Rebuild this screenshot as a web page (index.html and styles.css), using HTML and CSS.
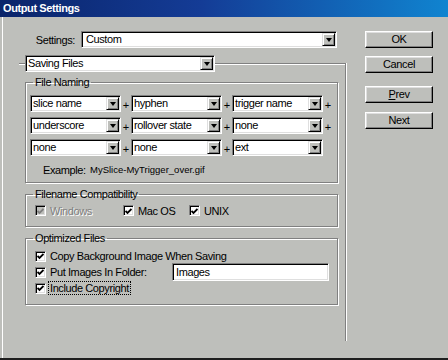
FILE: index.html
```html
<!DOCTYPE html>
<html>
<head>
<meta charset="utf-8">
<title>Output Settings</title>
<link rel="stylesheet" href="styles.css">
</head>
<body>
<div class="titlebar"><span class="title">Output Settings</span></div>
<div class="window">
  <div class="left">
    <div class="settings-row">
      <span class="settings-label">Settings:</span>
      <div class="combo combo-settings"><span class="combo-text">Custom</span><span class="arrow"></span></div>
    </div>
    <fieldset class="outer">
      <legend class="outer-legend"><div class="combo combo-section"><span class="combo-text">Saving Files</span><span class="arrow"></span></div></legend>

      <fieldset class="group naming">
        <legend>File Naming</legend>
        <div class="name-row">
          <div class="combo combo-name"><span class="combo-text">slice name</span><span class="arrow"></span></div><span class="plus">+</span>
          <div class="combo combo-name"><span class="combo-text">hyphen</span><span class="arrow"></span></div><span class="plus">+</span>
          <div class="combo combo-name"><span class="combo-text">trigger name</span><span class="arrow"></span></div><span class="plus">+</span>
        </div>
        <div class="name-row">
          <div class="combo combo-name"><span class="combo-text">underscore</span><span class="arrow"></span></div><span class="plus">+</span>
          <div class="combo combo-name"><span class="combo-text">rollover state</span><span class="arrow"></span></div><span class="plus">+</span>
          <div class="combo combo-name"><span class="combo-text">none</span><span class="arrow"></span></div><span class="plus">+</span>
        </div>
        <div class="name-row">
          <div class="combo combo-name"><span class="combo-text">none</span><span class="arrow"></span></div><span class="plus">+</span>
          <div class="combo combo-name"><span class="combo-text">none</span><span class="arrow"></span></div><span class="plus">+</span>
          <div class="combo combo-name"><span class="combo-text">ext</span><span class="arrow"></span></div>
        </div>
        <div class="example"><span class="ex-label">Example:</span><span class="ex-value">MySlice-MyTrigger_over.gif</span></div>
      </fieldset>

      <fieldset class="group compat">
        <legend>Filename Compatibility</legend>
        <div class="cb-row">
          <span class="cb-item item-win disabled"><span class="cb"><svg width="7" height="7" viewBox="0 0 7 7"><path d="M0.5 3 L2.5 5 L6.5 1" fill="none" stroke="currentColor" stroke-width="1.8"/></svg></span><span class="cb-text">Windows</span></span>
          <span class="cb-item item-mac"><span class="cb"><svg width="7" height="7" viewBox="0 0 7 7"><path d="M0.5 3 L2.5 5 L6.5 1" fill="none" stroke="currentColor" stroke-width="1.8"/></svg></span><span class="cb-text">Mac OS</span></span>
          <span class="cb-item"><span class="cb"><svg width="7" height="7" viewBox="0 0 7 7"><path d="M0.5 3 L2.5 5 L6.5 1" fill="none" stroke="currentColor" stroke-width="1.8"/></svg></span><span class="cb-text">UNIX</span></span>
        </div>
      </fieldset>

      <fieldset class="group optimized">
        <legend>Optimized Files</legend>
        <div class="opt-row"><span class="cb"><svg width="7" height="7" viewBox="0 0 7 7"><path d="M0.5 3 L2.5 5 L6.5 1" fill="none" stroke="currentColor" stroke-width="1.8"/></svg></span><span class="cb-text">Copy Background Image When Saving</span></div>
        <div class="opt-row"><span class="cb"><svg width="7" height="7" viewBox="0 0 7 7"><path d="M0.5 3 L2.5 5 L6.5 1" fill="none" stroke="currentColor" stroke-width="1.8"/></svg></span><span class="cb-text folder-label">Put Images In Folder:</span><div class="textfield">Images</div></div>
        <div class="opt-row"><span class="cb"><svg width="7" height="7" viewBox="0 0 7 7"><path d="M0.5 3 L2.5 5 L6.5 1" fill="none" stroke="currentColor" stroke-width="1.8"/></svg></span><span class="cb-text focus">Include Copyright</span></div>
      </fieldset>
    </fieldset>
  </div>
  <div class="buttons">
    <div class="btn btn-ok">OK</div>
    <div class="btn btn-cancel">Cancel</div>
    <div class="btn btn-prev"><u>P</u>rev</div>
    <div class="btn">Next</div>
  </div>
</div>
</body>
</html>
```

FILE: styles.css
```css
html, body {
  margin: 0;
  padding: 0;
}
body {
  width: 448px;
  height: 360px;
  overflow: hidden;
  background: #bebfbb;
  font-family: "Liberation Sans", Arial, sans-serif;
  font-size: 11px;
  letter-spacing: -0.4px;
  color: #000;
}

.titlebar {
  height: 17px;
  background: linear-gradient(to right, #0a246a 0%, #143c96 45%, #1084d0 100%);
  color: #fff;
  padding-left: 3px;
  box-sizing: border-box;
}
.title {
  font-weight: bold;
  font-size: 11px;
  line-height: 17px;
  letter-spacing: -0.4px;
}

.window {
  height: 343px;
  box-sizing: border-box;
  border-bottom: 2px solid #1e1e1e;
  display: flex;
  box-shadow: inset 2px 0 0 #bebfbb, inset 3px 0 0 #fff;
}

.left {
  width: 346px;
  flex: none;
}

/* Settings row */
.settings-row {
  display: flex;
  align-items: center;
  margin-top: 14px;
  padding-left: 30px;
}
.settings-label {
  width: 45px;
  text-align: right;
  margin-right: 6px;
}

/* Combo box (sunken) */
.combo {
  display: flex;
  height: 17px;
  box-sizing: border-box;
  border: 1px solid;
  border-color: #808080 #fff #fff #808080;
  box-shadow: inset 1px 1px 0 #000, inset -1px -1px 0 #dfdfdf;
  background: #fff;
  padding: 1px;
}
.combo-text {
  flex: 1;
  min-width: 0;
  padding-left: 1px;
  line-height: 13px;
  white-space: nowrap;
  overflow: hidden;
}
.arrow {
  width: 13px;
  height: 13px;
  flex: none;
  box-sizing: border-box;
  background: #bebfbb;
  border: 1px solid;
  border-color: #dfdfdf #000 #000 #dfdfdf;
  box-shadow: inset 1px 1px 0 #fff, inset -1px -1px 0 #808080;
  display: flex;
  align-items: center;
  justify-content: center;
}
.arrow::after {
  content: "";
  width: 0;
  height: 0;
  border-left: 3px solid transparent;
  border-right: 3px solid transparent;
  border-top: 4px solid #000;
  margin-top: 1px;
}
.combo-settings {
  width: 256px;
}
.combo-settings .combo-text {
  padding-left: 3px;
}
.combo-section {
  width: 190px;
}
.combo-name {
  width: 91px;
  flex: none;
}

/* Fieldsets */
fieldset {
  margin: 0;
  min-width: 0;
}
legend {
  padding: 0 2px;
  line-height: 12px;
}
.outer {
  margin: 7px 0 0 19px;
  width: 327px;
  box-sizing: border-box;
  border: 0;
  border-top: 1px solid #808080;
  border-right: 1px solid #808080;
  box-shadow: inset 0 1px 0 #fff, 1px 0 0 #fff;
  padding: 4px 7px 36px 6px;
}
.outer-legend {
  padding: 0;
  line-height: normal;
}
.group {
  border: 1px solid #808080;
  box-shadow: inset 1px 1px 0 #fff, 1px 1px 0 #fff;
}
.group + .group {
  margin-top: 5px;
}

.naming {
  padding: 7px 4px 6px 4px;
}
.naming legend {
  margin-left: 3px;
}
.name-row {
  display: flex;
  align-items: center;
}
.name-row + .name-row {
  margin-top: 5px;
}
.plus {
  width: 10px;
  flex: none;
  text-align: center;
  letter-spacing: 0;
  padding-top: 2px;
}
.example {
  margin-top: 8px;
  padding-left: 13px;
  line-height: 12px;
  display: flex;
  align-items: center;
}
.ex-label {
  width: 47px;
  flex: none;
}
.ex-value {
  font-size: 9.5px;
  letter-spacing: 0;
}

/* Checkboxes */
.cb {
  width: 11px;
  height: 11px;
  flex: none;
  box-sizing: border-box;
  border: 1px solid;
  border-color: #808080 #fff #fff #808080;
  box-shadow: inset 1px 1px 0 #000, inset -1px -1px 0 #dfdfdf;
  background: #fff;
  color: #000;
  display: flex;
  align-items: center;
  justify-content: center;
  margin-right: 4px;
}
.cb svg {
  display: block;
  margin: 1px 0 0 0;
}

.compat {
  padding: 4px 9px 9px 9px;
}
.compat legend,
.optimized legend {
  margin-left: -2px;
}
.cb-row {
  display: flex;
  align-items: center;
  height: 13px;
}
.cb-item {
  display: flex;
  align-items: center;
}
.item-win {
  width: 88px;
}
.item-mac {
  width: 66px;
}
.disabled .cb {
  background: #bebfbb;
  color: #808080;
}
.disabled .cb-text {
  color: #808080;
  text-shadow: 1px 1px 0 #fff;
}

.optimized {
  padding: 4px 8px 8px 9px;
}
.opt-row {
  display: flex;
  align-items: center;
  height: 16px;
}
.folder-label {
  width: 122px;
  flex: none;
}
.textfield {
  width: 157px;
  height: 18px;
  margin: -1px 0;
  box-sizing: border-box;
  border: 1px solid;
  border-color: #808080 #fff #fff #808080;
  box-shadow: inset 1px 1px 0 #000, inset -1px -1px 0 #dfdfdf;
  background: #fff;
  padding: 0 3px;
  line-height: 16px;
}
.focus {
  outline: 1px dotted #000;
  margin-left: -1px;
  padding: 0 1px;
  line-height: 12px;
}

/* Buttons */
.buttons {
  margin-left: 19px;
  padding-top: 14px;
  display: flex;
  flex-direction: column;
}
.btn {
  width: 68px;
  height: 17px;
  box-sizing: border-box;
  border: 1px solid;
  border-color: #fff #000 #000 #fff;
  box-shadow: inset -1px -1px 0 #808080, inset 1px 1px 0 #dfdfdf;
  text-align: center;
  line-height: 15px;
}
.btn-ok {
  margin-bottom: 8px;
}
.btn-cancel {
  margin-bottom: 13px;
}
.btn-prev {
  margin-bottom: 9px;
}
.btn u {
  text-decoration: underline;
}
```
